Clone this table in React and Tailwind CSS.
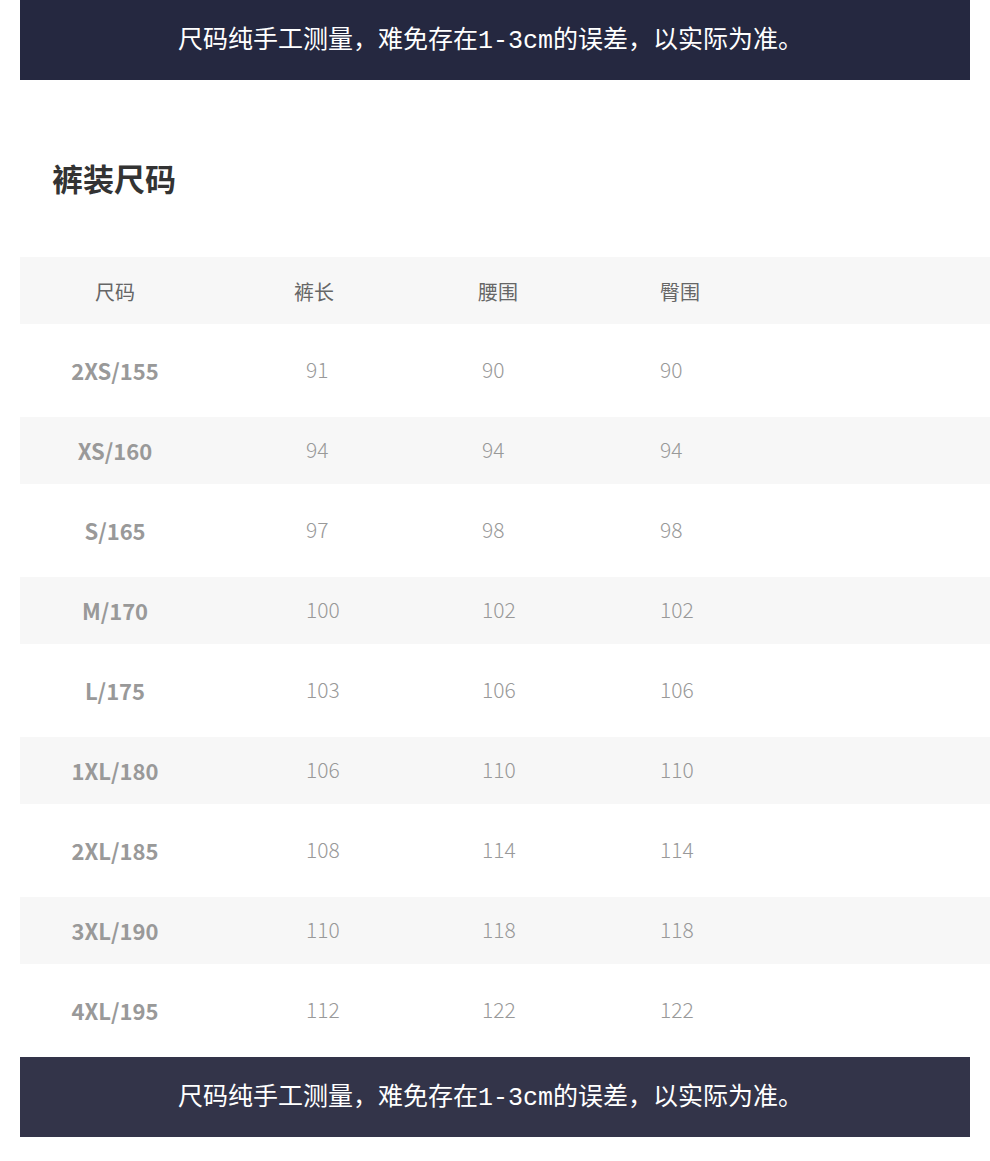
const rows = [
  ["2XS/155", "91", "90", "90"],
  ["XS/160", "94", "94", "94"],
  ["S/165", "97", "98", "98"],
  ["M/170", "100", "102", "102"],
  ["L/175", "103", "106", "106"],
  ["1XL/180", "106", "110", "110"],
  ["2XL/185", "108", "114", "114"],
  ["3XL/190", "110", "118", "118"],
  ["4XL/195", "112", "122", "122"],
];

function Notice({ dark }) {
  return (
    <div
      className={`mx-5 h-20 flex items-center pl-[158px] pt-[4px] text-white text-[25px] font-['Liberation_Mono','Noto_Sans_CJK_SC',monospace] ${
        dark ? "bg-[#252840]" : "bg-[#333449]"
      }`}
    >
      尺码纯手工测量，难免存在1-3cm的误差，以实际为准。
    </div>
  );
}

export default function App() {
  return (
    <div className="w-[990px] min-h-[1161px] bg-white font-['Noto_Sans_CJK_SC','Noto_Sans',sans-serif]">
      <Notice dark />

      {/* Title */}
      <div className="h-[170px] flex items-center pl-[52px] pt-[26px]">
        <h1 className="text-[31px] font-bold text-[#333]">裤装尺码</h1>
      </div>

      {/* Table */}
      <div className="ml-5">
        <div className="h-20 flex items-center">
          <div className="w-full h-[67px] bg-[#f7f7f7] flex items-center pt-[4px] text-[20px] text-[#666]">
            <div className="w-[190px] text-center">尺码</div>
            <div className="w-[183px] pl-[84px]">裤长</div>
            <div className="w-[183px] pl-[85px]">腰围</div>
            <div className="pl-[84px]">臀围</div>
          </div>
        </div>
        {rows.map((r, i) => (
          <div key={r[0]} className="h-20 flex items-center">
            <div
              className={`w-full h-[67px] flex items-center text-[#999] ${
                i % 2 === 1 ? "bg-[#f7f7f7]" : "bg-white"
              }`}
            >
              <div className="w-[190px] text-center text-[22px] font-bold">{r[0]}</div>
              <div className="w-[172px] pl-[96px] text-[21px] font-light">{r[1]}</div>
              <div className="w-[178px] pl-[100px] text-[21px] font-light">{r[2]}</div>
              <div className="pl-[100px] text-[21px] font-light">{r[3]}</div>
            </div>
          </div>
        ))}
      </div>

      <div className="h-[7px]" />
      <Notice />
    </div>
  );
}
